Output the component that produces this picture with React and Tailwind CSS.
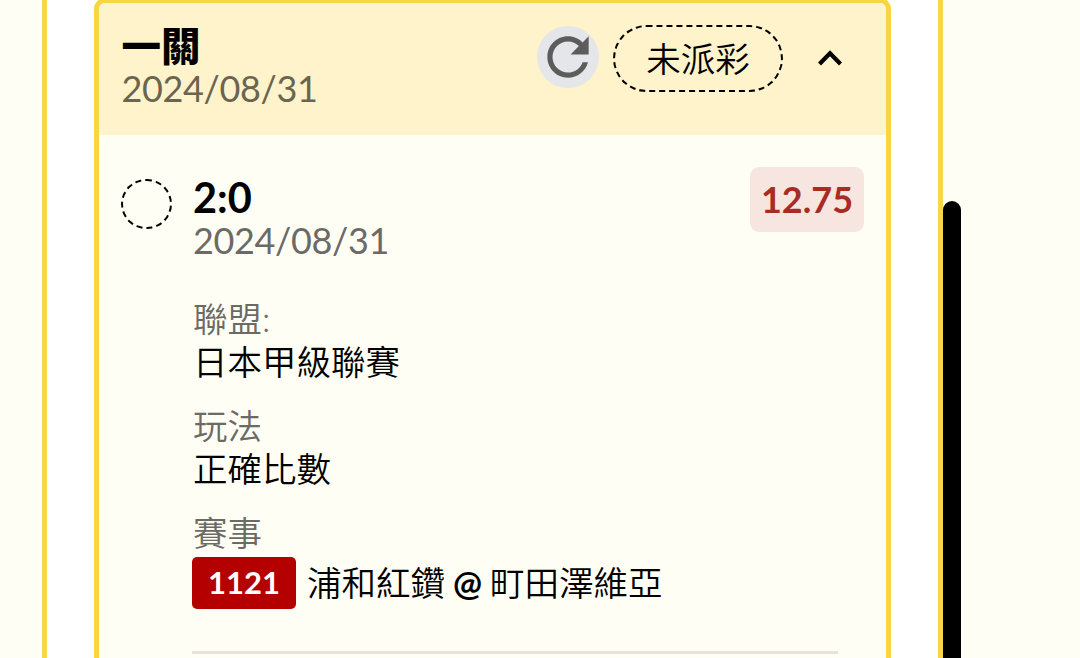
import React from 'react';

const RefreshIcon = () => (
    <svg className="w-[62px] h-[62px]" viewBox="0 0 24 24" fill="#5c5c5c">
        <path d="M17.65 6.35C16.2 4.9 14.21 4 12 4c-4.42 0-7.99 3.58-7.99 8s3.57 8 7.99 8c3.73 0 6.84-2.55 7.73-6h-2.08c-.82 2.33-3.04 4-5.65 4-3.31 0-6-2.69-6-6s2.69-6 6-6c1.66 0 3.14.69 4.22 1.78L13 11h7V4l-2.35 2.35z" />
    </svg>
);

const ChevronUp = () => (
    <svg className="w-[26px] h-[18px]" viewBox="0 0 26 18" fill="none">
        <path d="M2.5 15L13 4.3L23.5 15" stroke="#000" strokeWidth="4.2" />
    </svg>
);

const details = [
    { label: '聯盟:', value: '日本甲級聯賽' },
    { label: '玩法', value: '正確比數' },
];

const App = () => {
    return (
        <div className="h-[658px] w-[1080px] overflow-hidden flex bg-[#fffef5] text-black font-['Lato','Noto_Sans_CJK_TC',sans-serif]">
            <div className="ml-[42px] w-[901px] shrink-0 h-full border-x-[5px] border-[#f5d848] bg-white px-[47px]">
                <div className="-mt-[2px] h-[720px] border-[5px] border-[#f8d642] rounded-[11px] overflow-hidden bg-[#fffef5]">
                    <div className="h-[132px] bg-[#fff3cb] pl-[22.5px] flex items-start">
                        <div className="pt-[21px]">
                            <h1 className="text-[39.5px] leading-[43px] font-black">一關</h1>
                            <p className="text-[36px] leading-[43px] tracking-[-0.35px] text-[#6b6450]">2024/08/31</p>
                        </div>
                        <div className="ml-auto mr-[43px] pt-[22px] flex items-start">
                            <div className="mt-[1px] w-[62px] h-[62px] rounded-full bg-[#e4e6e9] flex items-center justify-center">
                                <RefreshIcon />
                            </div>
                            <div className="ml-[14px] w-[170px] h-[67px] rounded-[34px] border-2 border-dashed border-black flex items-center justify-center text-[34.5px] leading-[43px] font-[350]">
                                未派彩
                            </div>
                            <div className="ml-[34px] mt-[24px]">
                                <ChevronUp />
                            </div>
                        </div>
                    </div>

                    <div className="pl-[22px] pr-[22px] pt-[32px] flex items-start">
                        <div className="mt-[12px] w-[51px] h-[50px] shrink-0 rounded-full border-2 border-dashed border-black" />
                        <div className="ml-[21px] mt-[9px]">
                            <h2 className="text-[41.5px] leading-[43px] font-bold">2:0</h2>
                            <p className="text-[36px] leading-[43px] tracking-[-0.35px] text-[#6b6a65]">2024/08/31</p>
                        </div>
                        <div className="ml-auto w-[114px] h-[65px] pb-[2px] rounded-[9px] bg-[#f7e6df] text-[#a92b23] text-[36px] font-bold flex items-center justify-center">
                            12.75
                        </div>
                    </div>

                    <div className="ml-[93px] mr-[48px] mt-[35px] font-[350]">
                        {details.map((d) => (
                            <div key={d.label} className="pl-px mb-[21px] text-[34.5px] leading-[43px]">
                                <p className="text-[#6b6a65]">{d.label}</p>
                                <p>{d.value}</p>
                            </div>
                        ))}
                        <p className="pl-px text-[34.5px] leading-[43px] text-[#6b6a65]">賽事</p>
                        <div className="mt-[3px] flex items-center text-[34.5px] leading-[52px]">
                            <span className="mr-[11px] w-[104px] h-[52px] pb-[2px] rounded-[5px] bg-[#b50000] text-white text-[31px] font-bold flex items-center justify-center">
                                1121
                            </span>
                            <span>浦和紅鑽</span>
                            <span className="mx-[8px] font-bold">@</span>
                            <span>町田澤維亞</span>
                        </div>
                        <div className="mt-[42px] h-[3px] bg-[#e8e2da]" />
                    </div>
                </div>
            </div>
            <div className="mt-[201px] w-[18px] h-[600px] rounded-full bg-black" />
        </div>
    );
};

export default App;
